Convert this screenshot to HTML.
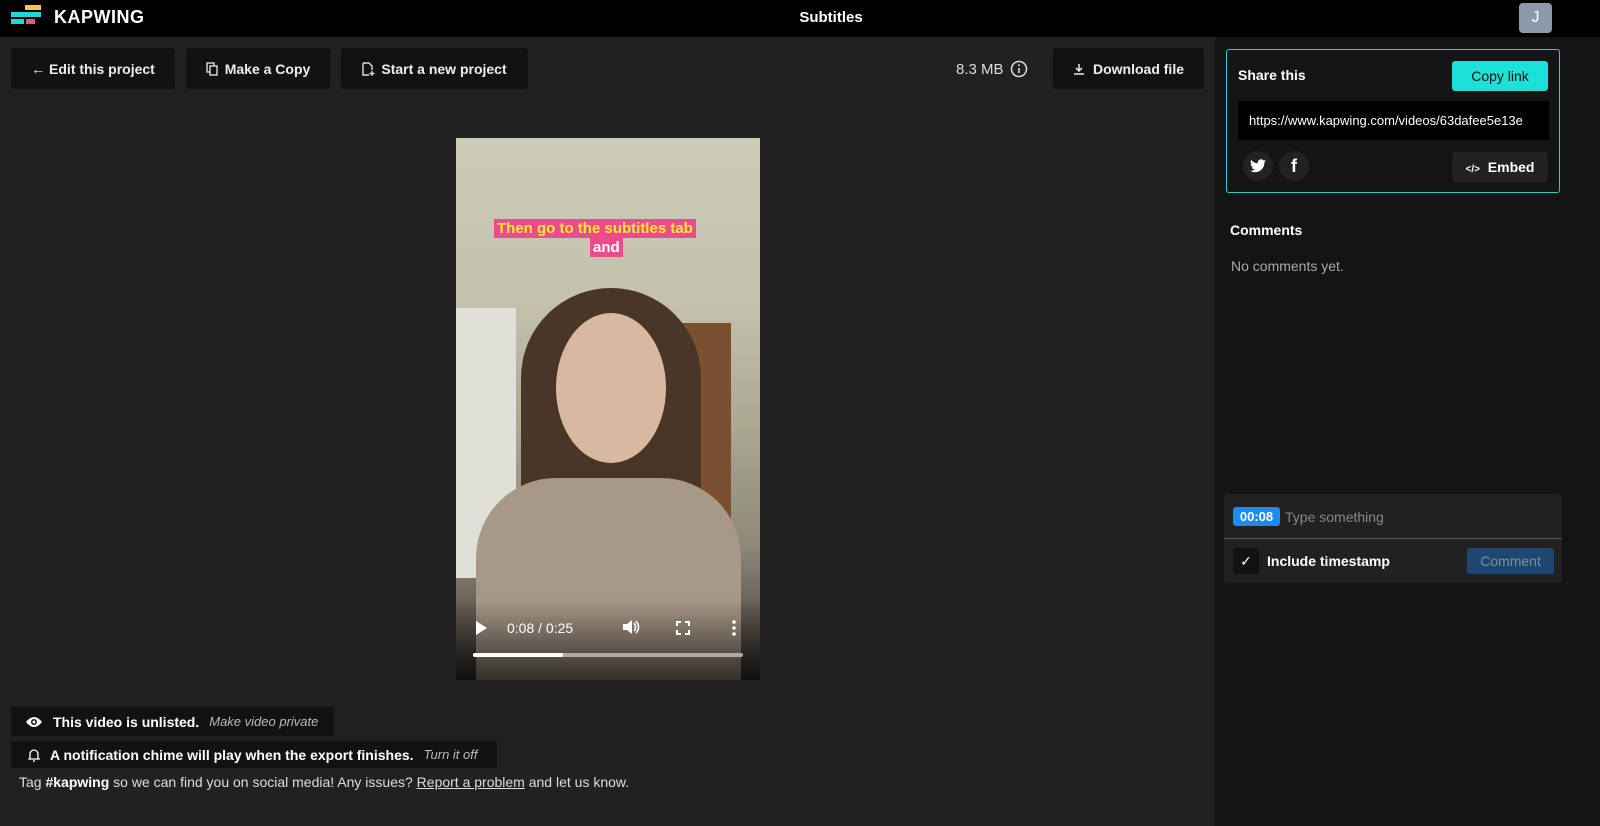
<!DOCTYPE html>
<html><head><style>
*{margin:0;padding:0;box-sizing:border-box}
body{width:1600px;height:826px;background:#212121;font-family:"Liberation Sans",sans-serif;color:#fff;position:relative;overflow:hidden}
.abs{position:absolute}
.top{left:0;top:0;width:1600px;height:37px;background:#000}
.btn{position:absolute;top:48px;height:41px;background:#121212;border-radius:3px;font-size:14px;font-weight:bold;display:flex;align-items:center;justify-content:center;color:#eee}
.right{left:1215px;top:37px;width:385px;height:789px;background:#141414}
.pill{position:absolute;background:#121212;font-size:14px;display:flex;align-items:center;padding-left:14px;color:#fff;font-weight:bold}
.pill i{font-weight:normal;color:#bbb;margin-left:10px;font-size:13px}
svg{display:block}
</style></head><body>
<div class="abs top"></div>
<svg class="abs" style="left:11px;top:5px" width="32" height="24"><rect x="14" y="0" width="16" height="5" fill="#f6c744"/><rect x="0" y="7" width="30" height="5" fill="#1ed8d4"/><rect x="0" y="14" width="13" height="5" fill="#1ed8d4"/><rect x="15" y="14" width="9" height="5" fill="#f0508e"/></svg>
<div class="abs" style="left:54px;top:7px;font-size:18px;font-weight:bold;letter-spacing:.5px">KAPWING</div>
<div class="abs" style="left:0;width:1662px;top:9px;text-align:center;font-size:15px;font-weight:bold">Subtitles</div>
<div class="abs" style="left:1519px;top:3px;width:33px;height:30px;background:#8b99a8;border-radius:4px;text-align:center;line-height:30px;font-size:16px">J</div>

<div class="btn" style="left:11px;width:164px">← Edit this project</div>
<div class="btn" style="left:186px;width:144px"><svg width="12" height="14" style="margin-right:7px"><rect x="1" y="1" width="7" height="9" fill="none" stroke="#ddd" stroke-width="1.4"/><rect x="4" y="4" width="7" height="9" fill="#121212" stroke="#ddd" stroke-width="1.4"/></svg>Make a Copy</div>
<div class="btn" style="left:341px;width:187px"><svg width="13" height="14" style="margin-right:6px"><path d="M1 1h6l3 3v4M1 1v12h6" fill="none" stroke="#ddd" stroke-width="1.4"/><path d="M10 9v5M7.5 11.5h5" stroke="#ddd" stroke-width="1.4"/></svg>Start a new project</div>
<div class="abs" style="left:956px;top:60px;font-size:15px;color:#ddd;display:flex;align-items:center">8.3 MB <svg width="18" height="18" style="margin-left:6px"><circle cx="9" cy="9" r="7.5" fill="none" stroke="#ddd" stroke-width="1.5"/><path d="M9 8v5" stroke="#ddd" stroke-width="1.6"/><circle cx="9" cy="5.3" r="1" fill="#ddd"/></svg></div>
<div class="btn" style="left:1053px;width:151px"><svg width="12" height="12" style="margin-right:8px"><path d="M6 1v7M3 5l3 3 3-3M1 11h10" fill="none" stroke="#eee" stroke-width="1.5"/></svg>Download file</div>

<div class="abs" style="left:456px;top:138px;width:304px;height:542px;overflow:hidden;background:linear-gradient(180deg,#cdcbb8 0%,#c4c2ad 30%,#a9a58f 55%,#8f8879 75%,#3a3530 100%)">
 <div class="abs" style="left:0;top:170px;width:60px;height:270px;background:#e0e0d8"></div>
 <div class="abs" style="left:215px;top:185px;width:60px;height:250px;background:#7a5030"></div>
 <div class="abs" style="left:65px;top:150px;width:180px;height:392px;background:#4a3628;border-radius:90px 90px 0 0"></div>
 <div class="abs" style="left:100px;top:175px;width:110px;height:150px;background:#d9b8a0;border-radius:50%"></div>
 <div class="abs" style="left:20px;top:340px;width:265px;height:202px;background:#a89888;border-radius:80px 80px 0 0"></div>
 <div class="abs" style="left:0;top:460px;width:304px;height:82px;background:linear-gradient(180deg,transparent,rgba(0,0,0,.7))"></div>
 <div class="abs" style="left:38px;top:81px;background:#ee4b8c;color:#ffe933;font-size:15px;font-weight:bold;padding:0 3px;line-height:19px">Then go to the subtitles tab</div>
 <div class="abs" style="left:134px;top:100px;background:#ee4b8c;color:#fff;font-size:15px;font-weight:bold;padding:0 3px;line-height:19px">and</div>
 <div class="abs" style="left:20px;top:483px;width:0;height:0;border-left:11px solid #fff;border-top:7px solid transparent;border-bottom:7px solid transparent"></div>
 <div class="abs" style="left:51px;top:482px;font-size:14px;color:#fff">0:08 / 0:25</div>
 <svg class="abs" style="left:166px;top:481px" width="18" height="16"><path d="M1 5h4l5-4v14l-5-4H1z" fill="#fff"/><path d="M12 4q3 4 0 8M14 2q5 6 0 12" fill="none" stroke="#fff" stroke-width="1.6"/></svg>
 <svg class="abs" style="left:220px;top:483px" width="14" height="14"><path d="M1 5V1h4M9 1h4v4M13 9v4H9M5 13H1V9" fill="none" stroke="#fff" stroke-width="2"/></svg>
 <svg class="abs" style="left:276px;top:482px" width="4" height="16"><circle cx="2" cy="2" r="1.8" fill="#fff"/><circle cx="2" cy="8" r="1.8" fill="#fff"/><circle cx="2" cy="14" r="1.8" fill="#fff"/></svg>
 <div class="abs" style="left:17px;top:515px;width:270px;height:4px;background:#aaa;border-radius:2px"></div>
 <div class="abs" style="left:17px;top:515px;width:90px;height:4px;background:#fff;border-radius:2px"></div>
</div>

<div class="pill" style="left:11px;top:707px;width:323px;height:29px"><svg width="18" height="12" style="margin-right:10px"><path d="M1 6q8-10 16 0q-8 10-16 0z" fill="#fff"/><circle cx="9" cy="6" r="3" fill="#121212"/><circle cx="9" cy="6" r="1.5" fill="#fff"/></svg>This video is unlisted.<i>Make video private</i></div>
<div class="pill" style="left:11px;top:741px;width:486px;height:27px;padding-left:17px"><svg width="12" height="14" style="margin-right:10px"><path d="M2 10V6a4 4 0 0 1 8 0v4l1 1H1z" fill="none" stroke="#fff" stroke-width="1.3"/><path d="M5 13h2" stroke="#fff" stroke-width="1.3"/></svg>A notification chime will play when the export finishes.<i>Turn it off</i></div>
<div class="abs" style="left:19px;top:774px;font-size:14px;color:#ddd">Tag <b style="color:#fff">#kapwing</b> so we can find you on social media! Any issues? <u>Report a problem</u> and let us know.</div>

<div class="abs right"></div>
<div class="abs" style="left:1226px;top:49px;width:334px;height:144px;border:1.5px solid #1ecfcc;border-radius:3px"></div>
<div class="abs" style="left:1238px;top:67px;font-size:14px;font-weight:bold">Share this</div>
<div class="abs" style="left:1452px;top:61px;width:96px;height:30px;background:#1de0d8;border-radius:3px;color:#111;font-size:14px;text-align:center;line-height:30px">Copy link</div>
<div class="abs" style="left:1238px;top:101px;width:311px;height:39px;background:#000;font-size:13px;line-height:39px;padding-left:11px;overflow:hidden;white-space:nowrap">https://www.kapwing.com/videos/63dafee5e13e</div>
<div class="abs" style="left:1243px;top:151px;width:30px;height:30px;border-radius:50%;background:#222"><svg style="margin:8px 0 0 7px" width="16" height="14" viewBox="0 0 24 20"><path d="M24 2.4a10 10 0 0 1-2.8.8A5 5 0 0 0 23.3.4a10 10 0 0 1-3.1 1.2A4.9 4.9 0 0 0 11.8 6 14 14 0 0 1 1.7.9a4.9 4.9 0 0 0 1.5 6.6 4.9 4.9 0 0 1-2.2-.6 4.9 4.9 0 0 0 3.9 4.8 4.9 4.9 0 0 1-2.2.1 4.9 4.9 0 0 0 4.6 3.4A9.9 9.9 0 0 1 0 17.2 14 14 0 0 0 7.5 19.4c9 0 14-7.5 14-14v-.6A10 10 0 0 0 24 2.4z" fill="#fff"/></svg></div>
<div class="abs" style="left:1279px;top:151px;width:30px;height:30px;border-radius:50%;background:#222;text-align:center;line-height:30px;font-size:18px;font-weight:bold">f</div>
<div class="abs" style="left:1452px;top:152px;width:96px;height:30px;background:#222;border-radius:3px;font-size:14px;font-weight:bold;text-align:center;line-height:30px"><span style="font-size:10px">&lt;/&gt;</span>&nbsp; Embed</div>
<div class="abs" style="left:1230px;top:222px;font-size:14px;font-weight:bold">Comments</div>
<div class="abs" style="left:1231px;top:258px;font-size:14px;color:#aaa">No comments yet.</div>
<div class="abs" style="left:1224px;top:494px;width:338px;height:89px;background:#212121;border-radius:4px"></div>
<div class="abs" style="left:1224px;top:538px;width:338px;height:1px;background:#555"></div>
<div class="abs" style="left:1233px;top:507px;width:47px;height:19px;background:#1a8cf0;border-radius:3px;font-size:13px;font-weight:bold;text-align:center;line-height:19px">00:08</div>
<div class="abs" style="left:1285px;top:509px;font-size:14px;color:#888">Type something</div>
<div class="abs" style="left:1233px;top:548px;width:26px;height:26px;background:#121212;border-radius:3px;text-align:center;line-height:26px;font-size:14px">✓</div>
<div class="abs" style="left:1267px;top:553px;font-size:14px;font-weight:bold">Include timestamp</div>
<div class="abs" style="left:1467px;top:548px;width:87px;height:26px;background:#1e4670;border-radius:3px;color:#7b8fa3;font-size:14px;text-align:center;line-height:26px">Comment</div>
</body></html>
